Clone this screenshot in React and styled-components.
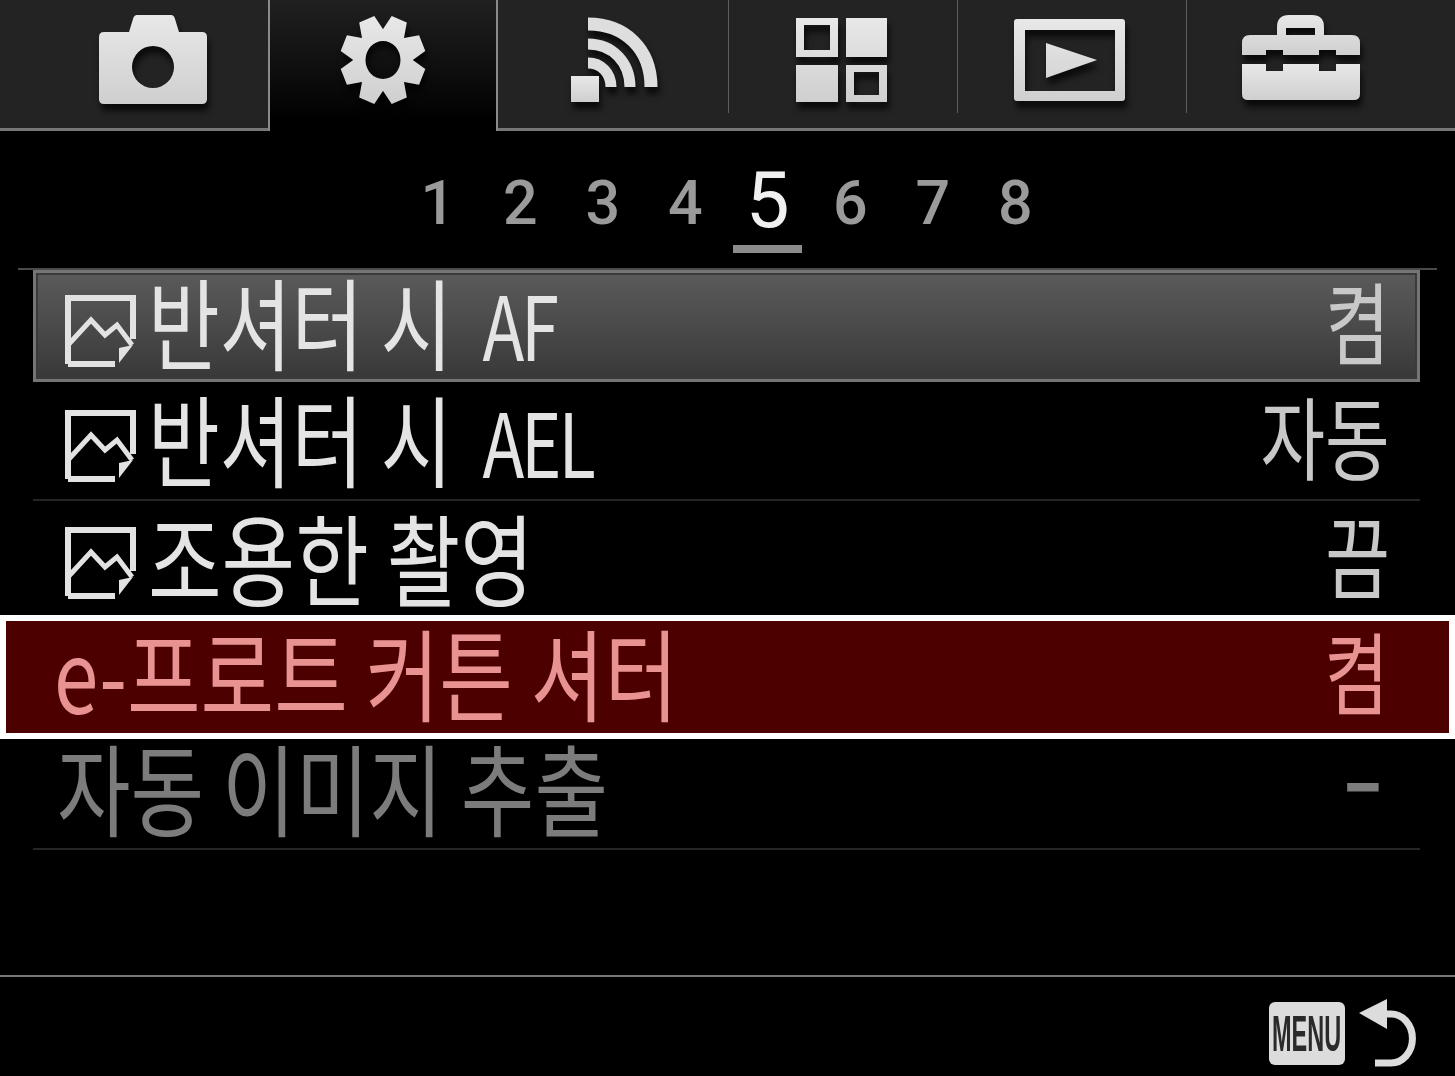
import React from "react";
import styled, { createGlobalStyle } from "styled-components";

const GlobalStyle = createGlobalStyle`
  html, body {
    margin: 0;
    padding: 0;
    background: #000;
  }
`;

const Screen = styled.div`
  width: 1455px;
  height: 1076px;
  background: #000;
  overflow: hidden;
  font-family: "Noto Sans CJK KR", "Noto Sans", sans-serif;
`;

const TabBar = styled.div`
  display: flex;
  height: 131px;
`;

const Tab = styled.div`
  position: relative;
  box-sizing: border-box;
  width: ${(p) => p.$width}px;
  display: flex;
  align-items: flex-start;
  justify-content: center;
  padding-left: ${(p) => p.$padLeft || 0}px;
  padding-right: ${(p) => p.$padRight || 0}px;
  background: ${(p) =>
    p.$active ? "linear-gradient(#202020, #0c0c0c 60%, #000 92%)" : "#232323"};
  border-bottom: ${(p) => (p.$active ? "none" : "3px solid #777")};
  border-left: ${(p) => (p.$active ? "2px solid #8a8a8a" : "none")};
  border-right: ${(p) => (p.$active ? "2px solid #8a8a8a" : "none")};

  &::after {
    content: "";
    display: ${(p) => (p.$divider ? "block" : "none")};
    position: absolute;
    top: 0;
    right: 0;
    width: 1px;
    height: 113px;
    background: #5e5e5e;
  }
`;

const TabIcon = styled.svg`
  display: block;
  overflow: visible;
  margin-top: ${(p) => p.$top}px;
  margin-left: ${(p) => p.$left || 0}px;
  filter: drop-shadow(2px 7px 3px rgba(0, 0, 0, 0.7));
`;

const Pager = styled.div`
  height: 137px;
  display: flex;
  justify-content: center;
  padding-right: 2px;
`;

const PageNumber = styled.div`
  box-sizing: border-box;
  width: 82.5px;
  height: 122px;
  display: flex;
  justify-content: center;
  align-items: flex-end;
  font-family: Roboto, "Liberation Sans", sans-serif;
`;

const PageDigit = styled.span`
  display: block;
  width: ${(p) => (p.$active ? "69px" : "auto")};
  text-align: center;
  font-size: ${(p) => (p.$active ? "78px" : "61px")};
  line-height: ${(p) => (p.$active ? "88px" : "70px")};
  padding-bottom: ${(p) => (p.$active ? "0" : "15px")};
  color: ${(p) => (p.$active ? "#f0f0f0" : "#9a9a9a")};
  border-bottom: ${(p) => (p.$active ? "8px solid #8c8c8c" : "none")};
  font-weight: ${(p) => (p.$active ? 400 : 500)};
`;

const TopRule = styled.div`
  height: 2px;
  margin: 0 18px;
  background: #4a4a4a;
`;

const MenuRow = styled.div`
  box-sizing: border-box;
  height: ${(p) => p.$height}px;
  margin: ${(p) => (p.$band ? "0" : "0 35px 0 33px")};
  display: flex;
  align-items: center;
  justify-content: space-between;
  padding: ${(p) => p.$pad || "0 30px 0 32px"};
  border-bottom: ${(p) => (p.$rule ? "2px solid #262626" : "none")};
`;

const SelectedRow = styled(MenuRow)`
  border: 3px solid #757575;
  background: linear-gradient(#5a5a5a, #4c4c4c 45%, #383838);
  box-shadow: inset 0 0 0 2px #3a3a3a;
`;

const BandRow = styled(MenuRow)`
  border: 6px solid #fff;
  background: #4d0000;
`;

const Lead = styled.div`
  display: flex;
  align-items: center;
  gap: 11px;
`;

const RowLabel = styled.span`
  display: inline-block;
  white-space: nowrap;
  font-size: 100px;
  line-height: 100px;
  color: ${(p) => p.$color};
  transform: translateY(${(p) => -p.$lift}px) scaleX(${(p) => p.$sx});
  transform-origin: left center;
`;

const Latin = styled.span`
  display: inline-block;
  font-size: 88px;
  letter-spacing: -4px;
  margin-left: 16px;
  transform: translateY(-2px);
`;

const RowValue = styled.span`
  display: inline-block;
  white-space: nowrap;
  font-size: 90px;
  line-height: 100px;
  font-weight: ${(p) => p.$weight || 400};
  color: ${(p) => p.$color};
  transform: translateY(${(p) => -p.$lift}px) scaleX(0.78);
  transform-origin: right center;
`;

const Spacer = styled.div`
  height: 125px;
`;

const BottomRule = styled.div`
  height: 2px;
  background: #777;
`;

const Footer = styled.div`
  height: 99px;
  display: flex;
  justify-content: flex-end;
  align-items: center;
  gap: 14px;
  padding: 14px 38px 0 0;
  box-sizing: border-box;
`;

const MenuBadge = styled.div`
  width: 76px;
  height: 63px;
  border-radius: 6px;
  background: #dcdcdc;
  display: flex;
  align-items: center;
  justify-content: center;
`;

const MenuBadgeText = styled.span`
  font-family: "Liberation Sans", sans-serif;
  font-weight: 700;
  font-size: 50px;
  line-height: 50px;
  margin: 0 -40px;
  color: #2a2a2a;
  transform: scaleX(0.47);
  white-space: nowrap;
`;

const PhotoMark = styled.svg`
  flex: none;
  margin-top: 10px;
`;

const gearPath = () => {
  const cx = 44;
  const cy = 44;
  const pts = [];
  for (let i = 0; i < 8; i++) {
    const a = ((22.5 + i * 45) * Math.PI) / 180;
    const w = 0.19;
    [
      [a - 0.39, 31],
      [a - w, 45],
      [a + w, 45],
      [a + 0.39, 31],
    ].forEach(([t, r]) => pts.push([cx + r * Math.sin(t) * 0.96, cy - r * Math.cos(t)]));
  }
  return (
    pts.map((p, i) => `${i ? "L" : "M"}${p[0].toFixed(1)} ${p[1].toFixed(1)}`).join(" ") +
    " Z M44 25 A17.5 19 0 1 0 44 63 A17.5 19 0 1 0 44 25 Z"
  );
};

const FILL = "url(#iconFill)";

const CameraIcon = () => (
  <TabIcon width="108" height="90" viewBox="0 0 108 90" $top={15}>
    <defs>
      <linearGradient id="iconFill" x1="0" y1="0" x2="0" y2="1">
        <stop offset="0" stopColor="#e8e8e8" />
        <stop offset="1" stopColor="#cfcfcf" />
      </linearGradient>
    </defs>
    <path
      fillRule="evenodd"
      fill={FILL}
      d="M38 0 H72 Q75 0 76 4 L80 17 H103 Q108 17 108 22 V84 Q108 89 103 89 H5 Q0 89 0 84 V22 Q0 17 5 17 H30 L34 4 Q35 0 38 0 Z M54 31 A21 21 0 1 0 54 73 A21 21 0 1 0 54 31 Z"
    />
  </TabIcon>
);

const GearIcon = () => (
  <TabIcon width="88" height="88" viewBox="0 0 88 88" $top={16}>
    <path fillRule="evenodd" fill={FILL} d={gearPath()} />
  </TabIcon>
);

const WaveIcon = () => (
  <TabIcon width="88" height="86" viewBox="0 0 88 86" $top={17} $left={2}>
    <rect x="0" y="59" width="28" height="26" fill={FILL} />
    <g fill="none" stroke="#dedede">
      <path strokeWidth="13" d="M17 7 C54 7 80 32 80 70" />
      <path strokeWidth="11" d="M17 27 C42 27 59 46 59 70" />
      <path strokeWidth="11" d="M17 46 C30 46 40 56 40 70" />
    </g>
  </TabIcon>
);

const GridIcon = () => (
  <TabIcon width="92" height="85" viewBox="0 0 92 85" $top={18} $left={-4}>
    <path
      fillRule="evenodd"
      fill={FILL}
      d="M0 0 H42 V39 H0 Z M8 7 V32 H34 V7 Z M50 0 H91 V39 H50 Z M0 47 H42 V84 H0 Z M50 47 H91 V84 H50 Z M58 54 V77 H83 V54 Z"
    />
  </TabIcon>
);

const PlayIcon = () => (
  <TabIcon width="112" height="83" viewBox="0 0 112 83" $top={19} $left={-6}>
    <path
      fillRule="evenodd"
      fill={FILL}
      d="M3 0 H108 Q111 0 111 3 V79 Q111 82 108 82 H3 Q0 82 0 79 V3 Q0 0 3 0 Z M11 11 V72 H101 V11 Z M32 24 L83 41 L32 59 Z"
    />
  </TabIcon>
);

const ToolboxIcon = () => (
  <TabIcon width="118" height="86" viewBox="0 0 118 86" $top={15}>
    <path
      fillRule="evenodd"
      fill={FILL}
      d="M35 20 V12 Q35 0 47 0 H70 Q82 0 82 12 V20 H110 Q118 20 118 28 V40 H94 V35 H77 V40 H41 V35 H24 V40 H0 V28 Q0 20 8 20 Z M44 20 H73 V13 H44 Z"
    />
    <path
      fill={FILL}
      d="M0 49 H24 V56 H41 V49 H77 V56 H94 V49 H118 V79 Q118 85 112 85 H6 Q0 85 0 79 Z"
    />
  </TabIcon>
);

const PhotoIcon = () => (
  <PhotoMark width="72" height="72" viewBox="0 0 72 72">
    <g fill="none" stroke="#e2e2e2" strokeWidth="6">
      <path d="M3 69 V3 H68 V44" />
      <path d="M3 69 H50" />
      <path d="M3 50 L26 25 L40 40 L52 30 L67 50" strokeWidth="5" />
    </g>
    <path d="M68 50 L54 53 L54 68 Z" fill="#e2e2e2" />
  </PhotoMark>
);

const ReturnArrow = () => (
  <svg width="58" height="70" viewBox="0 0 58 70" style={{ flex: "none" }}>
    <path d="M0 14 L28 0 L28 30 Z" fill="#dcdcdc" />
    <path
      d="M26 15 H32 A21 24 0 0 1 32 64 H16"
      fill="none"
      stroke="#dcdcdc"
      strokeWidth="7"
    />
  </svg>
);

const pages = [1, 2, 3, 4, 5, 6, 7, 8];

export default function App() {
  return (
    <Screen>
      <GlobalStyle />
      <TabBar>
        <Tab $width={268} $padLeft={38}>
          <CameraIcon />
        </Tab>
        <Tab $width={230} $active>
          <GearIcon />
        </Tab>
        <Tab $width={231} $divider>
          <WaveIcon />
        </Tab>
        <Tab $width={229} $divider>
          <GridIcon />
        </Tab>
        <Tab $width={229} $divider>
          <PlayIcon />
        </Tab>
        <Tab $width={268} $padRight={40}>
          <ToolboxIcon />
        </Tab>
      </TabBar>

      <Pager>
        {pages.map((n) => (
          <PageNumber key={n}>
            <PageDigit $active={n === 5}>{n}</PageDigit>
          </PageNumber>
        ))}
      </Pager>
      <TopRule />

      <SelectedRow $height={112} $pad="0 27px 0 29px">
        <Lead>
          <PhotoIcon />
          <RowLabel $color="#e4e4e4" $sx={0.78} $lift={4}>
            반셔터 시 <Latin>AF</Latin>
          </RowLabel>
        </Lead>
        <RowValue $color="#c8c8c8" $lift={7}>
          켬
        </RowValue>
      </SelectedRow>

      <MenuRow $height={119} $rule>
        <Lead>
          <PhotoIcon />
          <RowLabel $color="#e4e4e4" $sx={0.78} $lift={1}>
            반셔터 시 <Latin>AEL</Latin>
          </RowLabel>
        </Lead>
        <RowValue $color="#c8c8c8" $lift={7}>
          자동
        </RowValue>
      </MenuRow>

      <MenuRow $height={114}>
        <Lead>
          <PhotoIcon />
          <RowLabel $color="#e4e4e4" $sx={0.8} $lift={2}>
            조용한 촬영
          </RowLabel>
        </Lead>
        <RowValue $color="#c8c8c8" $lift={5}>
          끔
        </RowValue>
      </MenuRow>

      <BandRow $band $height={124} $pad="0 60px 0 48px">
        <RowLabel $color="#e89292" $sx={0.8} $lift={6}>
          e-프로트 커튼 셔터
        </RowLabel>
        <RowValue $color="#e89292" $lift={8}>
          켬
        </RowValue>
      </BandRow>

      <MenuRow $height={111} $rule $pad="0 38px 0 24px">
        <RowLabel $color="#7c7c7c" $sx={0.8} $lift={8}>
          자동 이미지 추출
        </RowLabel>
        <RowValue $color="#7c7c7c" $lift={20} $weight={700}>
          –
        </RowValue>
      </MenuRow>

      <Spacer />
      <BottomRule />
      <Footer>
        <MenuBadge>
          <MenuBadgeText>MENU</MenuBadgeText>
        </MenuBadge>
        <ReturnArrow />
      </Footer>
    </Screen>
  );
}
